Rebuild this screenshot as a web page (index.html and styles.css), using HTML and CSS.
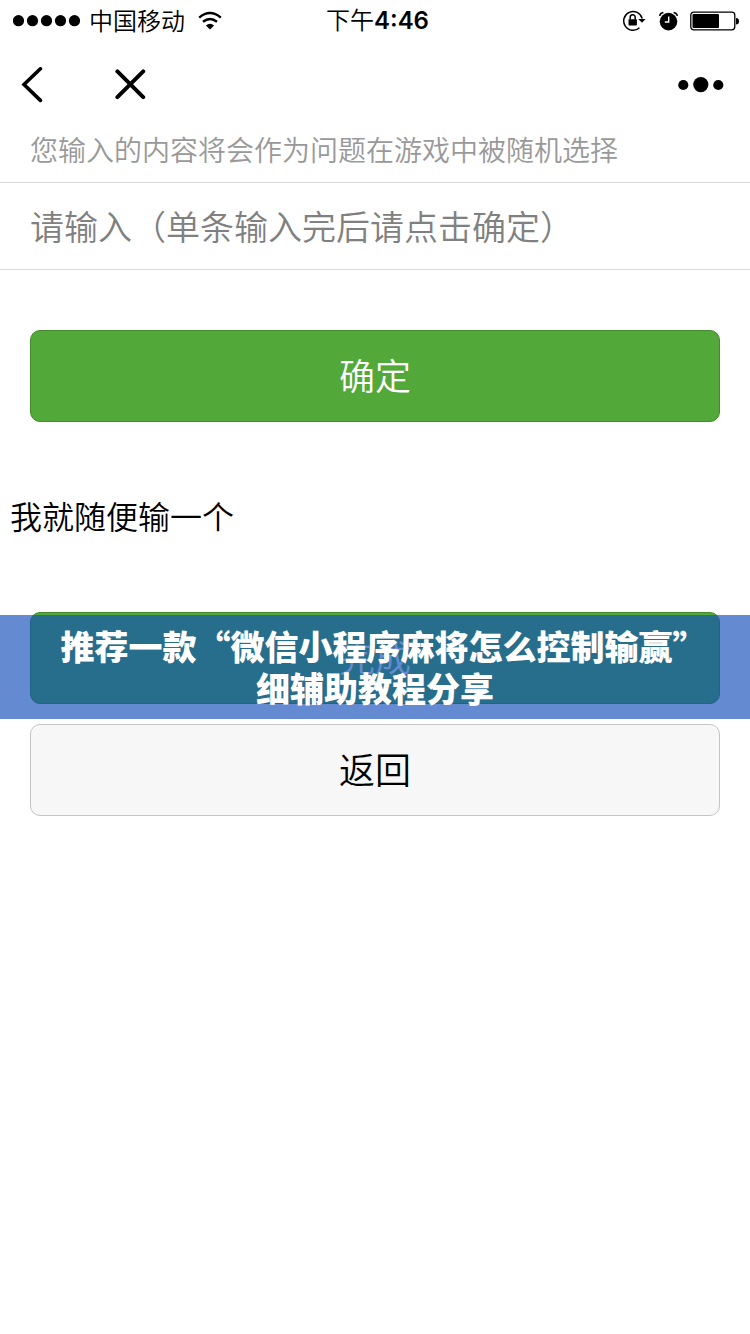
FILE: index.html
```html
<!DOCTYPE html>
<html lang="zh-CN">
<head>
<meta charset="utf-8">
<meta name="viewport" content="width=device-width">
<title>输入问题</title>
<link rel="stylesheet" href="styles.css">
</head>
<body>
<header>
  <div class="status">
    <div class="status-side">
      <svg class="signal" width="68" height="12" viewBox="0 0 68 12" aria-hidden="true"><circle cx="5.5" cy="5.7" r="5.6"/><circle cx="19.5" cy="5.7" r="5.6"/><circle cx="33.5" cy="5.7" r="5.6"/><circle cx="47.5" cy="5.7" r="5.6"/><circle cx="61.5" cy="5.7" r="5.6"/></svg>
      <span class="carrier">中国移动</span>
      <svg class="wifi" width="26" height="20" viewBox="0 0 26 20" aria-hidden="true"><path d="M2.2 6.6Q13-2.4 23.8 6.6" fill="none" stroke="#000" stroke-width="2.4"/><path d="M6 10.8Q13 5.2 20 10.8" fill="none" stroke="#000" stroke-width="2.4"/><path d="M8.9 14.4Q13 11.2 17.1 14.4L13 18.6Z"/></svg>
    </div>
    <time class="clock">下午<b>4:46</b></time>
    <div class="status-side status-right">
      <svg width="24" height="22" viewBox="0 0 24 22" aria-hidden="true"><path d="M20.2 8.5A9.4 9.4 0 1 0 17.5 17.8" fill="none" stroke="#000" stroke-width="1.5"/><path d="M16.2 9H23.6L20 12.8Z"/><rect x="6.5" y="9.2" width="8.4" height="6.2" rx=".6"/><path d="M8.2 9.5V7.3a2.5 2.5 0 0 1 5 0V9.5" fill="none" stroke="#000" stroke-width="1.5"/></svg>
      <svg width="20" height="20" viewBox="0 0 20 20" aria-hidden="true"><circle cx="10.5" cy="10.6" r="8.8"/><path d="M1.6 4.8Q2.2 2 5.4 1.5M15.6 1.5Q18.8 2 19.4 4.8" fill="none" stroke="#000" stroke-width="1.6"/><path d="M10.7 5.4V11H6.8" fill="none" stroke="#fff" stroke-width="1.4"/></svg>
      <svg width="50" height="20" viewBox="0 0 50 20" aria-hidden="true"><rect x=".8" y="1.2" width="44" height="17.6" rx="3" fill="none" stroke="#000" stroke-width="1.3"/><rect x="2.5" y="3" width="26.5" height="14" rx="1"/><path d="M46 7q3 0 3 3.3t-3 3.3Z"/></svg>
    </div>
  </div>
  <nav class="nav">
    <button class="icon" aria-label="返回上页"><svg width="22" height="36" viewBox="0 0 22 36"><path d="M19.4 1.8 3 17.5 19.4 33.4" fill="none" stroke="#000" stroke-width="3.6" stroke-linecap="round"/></svg></button>
    <button class="icon" aria-label="关闭"><svg width="32" height="32" viewBox="0 0 32 32"><path d="M2.4 2.4 28.2 28.2M28.2 2.4 2.4 28.2" fill="none" stroke="#000" stroke-width="4" stroke-linecap="round"/></svg></button>
    <button class="icon more" aria-label="更多"><svg width="46" height="16" viewBox="0 0 46 16"><circle cx="5.3" cy="8" r="5.1"/><circle cx="22.8" cy="7.6" r="7.6"/><circle cx="40.3" cy="8" r="5.1"/></svg></button>
  </nav>
</header>
<main>
  <form>
    <label class="hint" for="question">您输入的内容将会作为问题在游戏中被随机选择</label>
    <input class="field" id="question" type="text" placeholder="请输入（单条输入完后请点击确定）">
    <div class="row"><button class="btn primary" type="button">确定</button></div>
  </form>
  <p class="entry">我就随便输一个</p>
  <div class="row done">
    <button class="btn primary" type="button">完成</button>
    <h1 class="banner">推荐一款“微信小程序麻将怎么控制输赢<span class="half">”</span><br>细辅助教程分享</h1>
  </div>
  <div class="row"><button class="btn plain" type="button">返回</button></div>
</main>
</body>
</html>
```
FILE: styles.css
```css
* { box-sizing: border-box; }

body {
  margin: 0;
  background: #fff;
  color: #000;
  font-family: "Noto Sans CJK SC", sans-serif;
  font-weight: 350;
}

button, input { font: inherit; }

svg { display: block; }

.status {
  display: grid;
  grid-template-columns: 1fr auto 1fr;
  align-items: center;
  height: 40px;
  padding: 0 10px 0 13px;
  font-size: 24px;
  line-height: 38px;
}

.status-side { display: flex; align-items: center; gap: 8px; }
.status-right { justify-content: flex-end; gap: 12px; }
.carrier, .clock { padding-bottom: 2px; }
.wifi { margin-left: 4px; }
.clock { padding-left: 2px; }
.clock b { font-family: Inter, sans-serif; font-weight: 600; }

.nav {
  display: flex;
  align-items: center;
  gap: 72px;
  height: 90px;
  padding: 0 26px 0 21px;
}

.icon { padding: 0; border: 0; background: none; }
.more { margin-left: auto; }

.hint {
  display: block;
  padding: 0 30px 14px;
  color: #999;
  font-size: 28px;
  line-height: 38px;
}

.field {
  display: block;
  width: 100%;
  height: 88px;
  padding: 0 30px 2px;
  border: solid #d9d9d9;
  border-width: 1px 0;
  border-radius: 0;
  background: #fff;
  font-size: 34px;
  outline: 0;
}

.field::placeholder { color: #808080; opacity: 1; }

.row { padding: 0 30px; }
form .row { padding-top: 60px; }

.btn {
  display: block;
  width: 100%;
  height: 92px;
  padding: 0 0 4px;
  border: 1px solid;
  border-radius: 10px;
  font-size: 36px;
}

.primary { border-color: #428a2c; background: #52a838; color: #fff; }
.plain { border-color: #c4c4c4; background: #f7f7f7; color: #000; }

.entry {
  margin: 70px 0 74px;
  padding: 0 10px;
  font-size: 32px;
  line-height: 46px;
}

.done { position: relative; margin-bottom: 20px; }

.banner {
  position: absolute;
  top: 3px;
  left: 0;
  right: 0;
  margin: 0;
  padding: 10px 0;
  background: rgba(17, 77, 186, .65);
  color: #fff;
  font-size: 34px;
  font-weight: 900;
  line-height: 42px;
  text-align: center;
}

.half { font-feature-settings: "halt"; }
```
